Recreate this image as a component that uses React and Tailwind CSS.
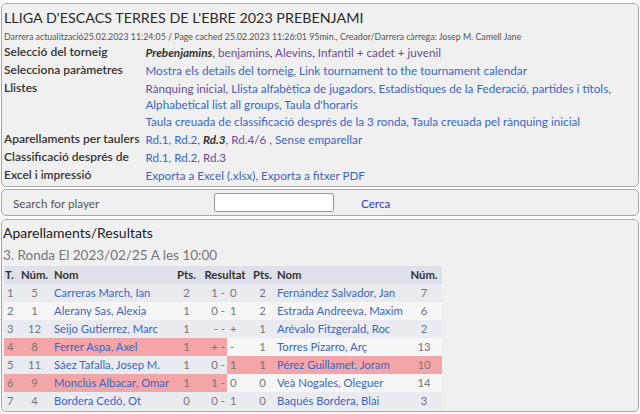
import React from "react";

const link = "text-[#3b66c4]";
const visited = "text-[#6b4c9a]";

const rows = [
  { t: 1, n1: 5, name1: "Carreras March, Ian", p1: 2, r1: "1 -", r2: "0", p2: 2, name2: "Fernández Salvador, Jan", n2: 7 },
  { t: 2, n1: 1, name1: "Alerany Sas, Alexia", p1: 1, r1: "0 -", r2: "1", p2: 2, name2: "Estrada Andreeva, Maxim", n2: 6 },
  { t: 3, n1: 12, name1: "Seijo Gutierrez, Marc", p1: 1, r1: "- -", r2: "+", p2: 1, name2: "Arévalo Fitzgerald, Roc", n2: 2 },
  { t: 4, n1: 8, name1: "Ferrer Aspa, Axel", p1: 1, r1: "+ -", r2: "-", p2: 1, name2: "Torres Pizarro, Arç", n2: 13, hl: "left" },
  { t: 5, n1: 11, name1: "Sáez Tafalla, Josep M.", p1: 1, r1: "0 -", r2: "1", p2: 1, name2: "Pérez Guillamet, Joram", n2: 10, hl: "right" },
  { t: 6, n1: 9, name1: "Monclús Albacar, Omar", p1: 1, r1: "1 -", r2: "0", p2: 0, name2: "Veà Nogales, Oleguer", n2: 14, hl: "left" },
  { t: 7, n1: 4, name1: "Bordera Cedó, Ot", p1: 0, r1: "0 -", r2: "1", p2: 0, name2: "Baqués Bordera, Blai", n2: 3 },
];

const Label = ({ children }) => (
  <td className="pr-1 text-[12px] font-semibold text-[#333] whitespace-nowrap align-top">{children}</td>
);

export default function App() {
  return (
    <div className="bg-white w-[640px] h-[414px] overflow-hidden px-[1px] pt-[3px] text-[11.7px] leading-[18px] text-[#333]" style={{ fontFamily: "Lato, 'Liberation Sans', sans-serif" }}>
      {/* Tournament header */}
      <div className="bg-[#f0f0f0] border border-[#a8a8a8] rounded-[5px] px-[2px] pb-[1px] h-[184px]">
        <h1 className="text-[14.3px] leading-[20px] pt-[4px] text-[#2a2a2a]">LLIGA D'ESCACS TERRES DE L'EBRE 2023 PREBENJAMI</h1>
        <div className="text-[8.8px] leading-[13px] mt-[2px] text-[#555]">
          Darrera actualització25.02.2023 11:24:05 / Page cached 25.02.2023 11:26:01 95min., Creador/Darrera càrrega: Josep M. Camell Jane
        </div>
        <table className="border-collapse">
          <tbody>
            <tr>
              <Label>Selecció del torneig</Label>
              <td className="pl-[2px]">
                <b className="italic text-[#333]">Prebenjamins</b>, <span className={visited}>benjamins</span>, <span className={visited}>Alevins</span>, <span className={visited}>Infantil</span> <span className={visited}>+ cadet + juvenil</span>
              </td>
            </tr>
            <tr>
              <Label>Selecciona paràmetres</Label>
              <td className={`pl-[2px] ${link}`}>Mostra els details del torneig, Link tournament to the tournament calendar</td>
            </tr>
            <tr>
              <Label>Llistes</Label>
              <td className={`pl-[2px] ${link} leading-[16px] pt-[1px]`}>
                <span className={visited}>Rànquing inicial</span>, Llista alfabètica de jugadors, Estadístiques de la Federació, partides i títols, Alphabetical list all groups, Taula d'horaris
                <div className="leading-[18px]">Taula creuada de classificació després de la 3 ronda, Taula creuada pel rànquing inicial</div>
              </td>
            </tr>
            <tr>
              <Label>Aparellaments per taulers</Label>
              <td className={`pl-[2px] ${link}`}>Rd.1, Rd.2, <b className="italic text-[#333]">Rd.3</b>, <span className={visited}>Rd.4/6</span> , Sense emparellar</td>
            </tr>
            <tr>
              <Label>Classificació després de</Label>
              <td className={`pl-[2px] ${link}`}>Rd.1, Rd.2, <span className={visited}>Rd.3</span></td>
            </tr>
            <tr>
              <Label>Excel i impressió</Label>
              <td className={`pl-[2px] ${link}`}>Exporta a Excel (.xlsx), Exporta a fitxer PDF</td>
            </tr>
          </tbody>
        </table>
      </div>

      {/* Search */}
      <div className="mt-[2px] bg-[#f0f0f0] border border-[#a8a8a8] rounded-[5px] h-[27px] flex items-center">
        <span className="ml-[11px] w-[201px] text-[#555]">Search for player</span>
        <div className="w-[120px] h-[19px] bg-white border border-[#999] rounded-[2px]"></div>
        <span className="ml-[27px] text-[#3333ee]">Cerca</span>
      </div>

      {/* Pairings */}
      <div className="mt-[3px] bg-[#f0f0f0] border border-[#a8a8a8] rounded-[5px] h-[193px] pl-[1px]">
        <h2 className="text-[14px] leading-[20px] pt-[3px] text-[#222]">Aparellaments/Resultats</h2>
        <div className="text-[13.5px] leading-[18px] mt-[3px] text-[#777]">3. Ronda El 2023/02/25 A les 10:00</div>
        <table className="table-fixed border-collapse w-[438px] text-[11.3px] leading-[18px] ml-[1px] mt-[2px]">
          <colgroup>
            <col className="w-[14px]" />
            <col className="w-[33px]" />
            <col className="w-[123px]" />
            <col className="w-[25px]" />
            <col className="w-[52px]" />
            <col className="w-[23px]" />
            <col className="w-[132px]" />
            <col className="w-[36px]" />
          </colgroup>
          <thead>
            <tr className="bg-[#dee1e9] font-bold text-[#333]">
              <th className="text-left pl-[1px]">T.</th>
              <th className="text-center">Núm.</th>
              <th className="text-left pl-[3px]">Nom</th>
              <th className="text-center">Pts.</th>
              <th className="text-center">Resultat</th>
              <th className="text-center">Pts.</th>
              <th className="text-left pl-[3px]">Nom</th>
              <th className="text-center">Núm.</th>
            </tr>
          </thead>
          <tbody>
            {rows.map((r, i) => {
              const base = i % 2 === 0 ? "bg-[#e9ebf0]" : "bg-[#f6f6f6]";
              const L = r.hl === "left" ? "bg-[#f3a5a7]" : "";
              const R = r.hl === "right" ? "bg-[#f3a5a7]" : "";
              return (
                <tr key={r.t} className={`${base} text-[#777]`}>
                  <td className={`${L} pl-[3px]`}>{r.t}</td>
                  <td className={`${L} text-center`}>{r.n1}</td>
                  <td className={`${L} pl-[3px] ${link} whitespace-nowrap overflow-hidden`}>{r.name1}</td>
                  <td className={`${L} text-center`}>{r.p1}</td>
                  <td className="p-0">
                    <div className="flex">
                      <span className={`${L} w-[28px] text-right pr-[2px]`}>{r.r1}</span>
                      <span className={`${R} flex-1 pl-[3px]`}>{r.r2}</span>
                    </div>
                  </td>
                  <td className={`${R} text-center`}>{r.p2}</td>
                  <td className={`${R} pl-[3px] ${link} whitespace-nowrap overflow-hidden`}>{r.name2}</td>
                  <td className={`${R} text-center`}>{r.n2}</td>
                </tr>
              );
            })}
          </tbody>
        </table>
      </div>
    </div>
  );
}
